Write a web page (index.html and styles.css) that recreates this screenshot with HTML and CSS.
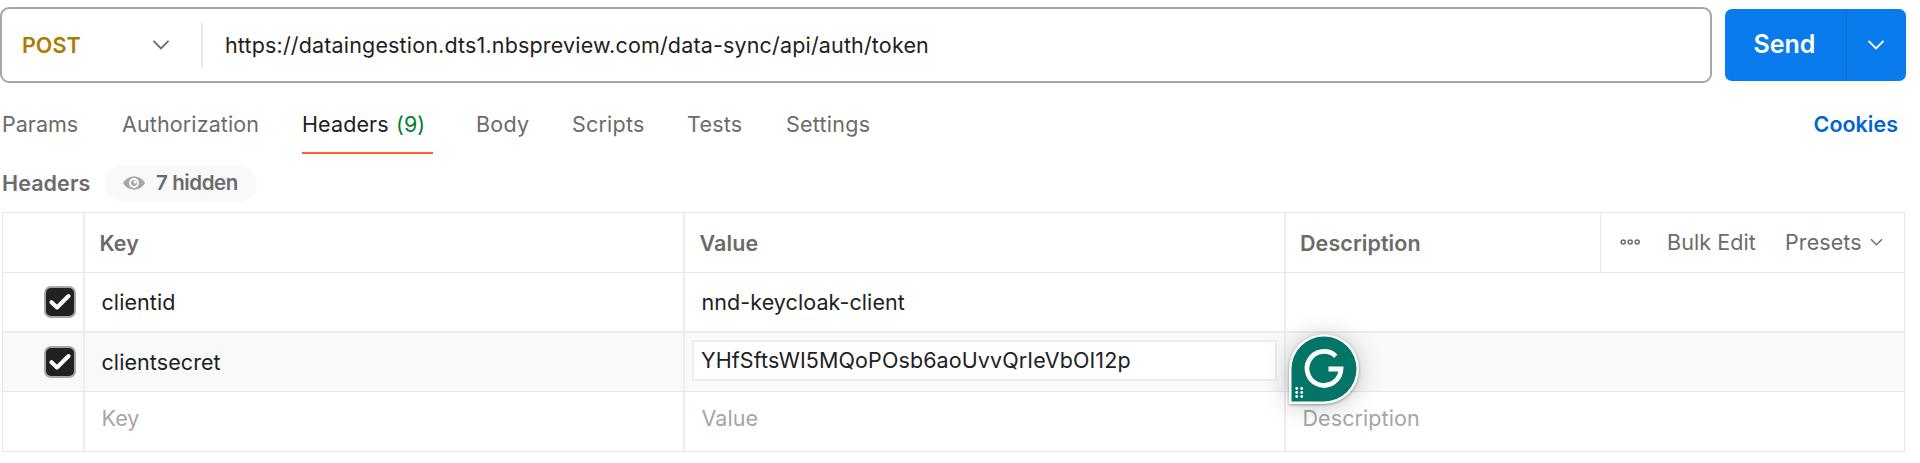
FILE: index.html
```html
<!DOCTYPE html>
<html lang="en">
<head>
<meta charset="utf-8">
<title>Request headers</title>
<link rel="stylesheet" href="styles.css">
</head>
<body>
<main class="request">
  <div class="bar">
    <div class="url-box">
      <div class="method">
        <span class="method-name">POST</span>
        <svg class="method-chevron" width="18" height="12" viewBox="0 0 18 12"><path d="M1.500 1.800 9 9.300l7.500-7.500" fill="none" stroke="#6b6b6b" stroke-width="1.900"/></svg>
      </div>
      <span class="url">https://dataingestion.dts1.nbspreview.com/data-sync/api/auth/token</span>
    </div>
    <div class="send">
      <span class="send-label">Send</span>
      <span class="send-more"><svg width="18" height="12" viewBox="0 0 18 12"><path d="M1.500 1.800 9 9.300l7.500-7.500" fill="none" stroke="#fff" stroke-width="1.900"/></svg></span>
    </div>
  </div>
  <nav class="tabs">
    <span class="tab t-params">Params</span>
    <span class="tab t-auth">Authorization</span>
    <span class="tab t-headers active">Headers <span class="count">(9)</span></span>
    <span class="tab t-body">Body</span>
    <span class="tab t-scripts">Scripts</span>
    <span class="tab t-tests">Tests</span>
    <span class="tab t-settings">Settings</span>
    <span class="cookies">Cookies</span>
  </nav>
  <div class="section">
    <span class="section-title">Headers</span>
    <span class="pill">
      <svg width="22" height="14" viewBox="0 0 22 14"><path d="M0 7C4.500-1.700 17.500-1.700 22 7 17.500 15.700 4.500 15.700 0 7z" fill="#a6a6a6"/><circle cx="11" cy="7" r="4.900" fill="#fff"/><circle cx="11" cy="7" r="3" fill="#a6a6a6"/><circle cx="12" cy="6" r="1.500" fill="#fff"/></svg>
      <span class="pill-text">7 hidden</span>
    </span>
  </div>
  <div class="table">
    <div class="row head">
      <div class="cell"></div>
      <div class="cell">Key</div>
      <div class="cell">Value</div>
      <div class="cell last">
        <span>Description</span>
        <div class="tools">
          <svg class="dots" width="20" height="8" viewBox="0 0 20 8" fill="none" stroke="#6b6b6b" stroke-width="1.500"><circle cx="3.200" cy="4" r="2"/><circle cx="10.200" cy="4" r="2"/><circle cx="17.200" cy="4" r="2"/></svg>
          <span class="bulk">Bulk Edit</span>
          <span class="presets">Presets</span>
          <svg class="presets-chevron" width="13" height="9" viewBox="0 0 13 9"><path d="M1 1.300 6.500 6.800 12 1.300" fill="none" stroke="#6b6b6b" stroke-width="1.400"/></svg>
        </div>
      </div>
    </div>
    <div class="row">
      <div class="cell check"><span class="box"><svg width="22" height="18" viewBox="0 0 22 18"><path d="M2.500 9.200 8 14.500 19.500 3" fill="none" stroke="#fff" stroke-width="4" stroke-linecap="round" stroke-linejoin="round"/></svg></span></div>
      <div class="cell">clientid</div>
      <div class="cell">nnd-keycloak-client</div>
      <div class="cell last"></div>
    </div>
    <div class="row hover">
      <div class="cell check"><span class="box"><svg width="22" height="18" viewBox="0 0 22 18"><path d="M2.500 9.200 8 14.500 19.500 3" fill="none" stroke="#fff" stroke-width="4" stroke-linecap="round" stroke-linejoin="round"/></svg></span></div>
      <div class="cell">clientsecret</div>
      <div class="cell edit"><span class="input">YHfSftsWI5MQoPOsb6aoUvvQrIeVbOI12p</span></div>
      <div class="cell last">
        <div class="assistant">
          <svg width="70" height="70" viewBox="0 0 70 70"><path d="M1 69V35A34 34 0 1 1 35 69z" fill="#fff"/><path d="M2.500 67.500V35A32.500 32.500 0 1 1 35 67.500z" fill="#027567"/><path d="M46.800 22.200A17 17 0 1 0 52 35H39.500" fill="none" stroke="#fff" stroke-width="4.800"/><g fill="#fff"><circle cx="7.700" cy="54.500" r="1.400"/><circle cx="12.700" cy="54.500" r="1.400"/><circle cx="7.700" cy="58.500" r="1.400"/><circle cx="12.700" cy="58.500" r="1.400"/><circle cx="7.700" cy="62.500" r="1.400"/><circle cx="12.700" cy="62.500" r="1.400"/></g></svg>
        </div>
      </div>
    </div>
    <div class="row empty">
      <div class="cell"></div>
      <div class="cell">Key</div>
      <div class="cell">Value</div>
      <div class="cell last">Description</div>
    </div>
  </div>
</main>
</body>
</html>
```
FILE: styles.css
```css
* { box-sizing: border-box; }
body {
  margin: 0;
  background: #fff;
  color: #212121;
  font: 400 21.5px/30px Inter, "Liberation Sans", sans-serif;
  overflow: hidden;
}
svg { display: block; flex: none; }
span { white-space: nowrap; }
.request { width: 1920px; height: 463px; padding-top: 7px; }

.bar { display: flex; gap: 12.5px; }
.url-box {
  display: flex;
  align-items: center;
  width: 1712px;
  height: 76px;
  border: 2px solid #a6a6a6;
  border-radius: 9px;
}
.method {
  display: flex;
  align-items: center;
  width: 201px;
  height: 44px;
  padding-left: 20px;
  border-right: 2px solid #e6e6e6;
}
.method-name { width: 130px; color: #ad7a03; font-weight: 600; }
.url { padding-left: 22px; letter-spacing: .16px; }
.send {
  display: flex;
  width: 181px;
  height: 72px;
  margin-top: 2px;
  border-radius: 7px;
  background: #097bed;
  color: #fff;
}
.send-label {
  width: 122px;
  padding-left: 29px;
  border-right: 1px solid #0b6fd3;
  font-size: 25px;
  font-weight: 600;
  line-height: 71px;
}
.send-more { display: flex; flex: 1; align-items: center; justify-content: center; }

.tabs {
  display: flex;
  height: 71px;
  padding: 26px 22px 0 2px;
  color: #6b6b6b;
}
.tab { height: 45px; letter-spacing: .12px; }
.t-params { width: 120px; letter-spacing: 0; }
.t-auth { width: 180px; }
.t-headers { width: 131px; margin-right: 43px; }
.t-body { width: 96px; letter-spacing: .25px; }
.t-scripts { width: 115px; letter-spacing: .2px; }
.t-tests { width: 99px; letter-spacing: .2px; }
.t-settings { letter-spacing: .25px; }
.active { color: #212121; border-bottom: 2px solid #ff6029; }
.count { margin-left: 1px; color: #007f31; }
.cookies { margin-left: auto; color: #0265d2; font-weight: 600; }

.section {
  display: flex;
  align-items: center;
  height: 58px;
  padding-left: 2px;
  color: #6b6b6b;
  font-weight: 600;
}
.section-title { width: 103px; letter-spacing: .1px; }
.pill {
  display: flex;
  align-items: center;
  gap: 11px;
  width: 152px;
  height: 37px;
  padding-left: 18px;
  border-radius: 19px;
  background: #f9f9f9;
}
.pill-text { font-size: 20.500px; letter-spacing: -.4px; }

.table { width: 1903px; margin-left: 2px; border: 1px solid #e6e6e6; border-bottom: 0; }
.row {
  display: grid;
  grid-template-columns: 82px 600px 601px 1fr;
  height: 60px;
  border-bottom: 1px solid #e6e6e6;
}
.row:nth-child(2) { border-bottom: 2px solid #ededed; }
.cell {
  display: flex;
  align-items: center;
  padding: 0 0 1px 16.5px;
  border-right: 2px solid #ededed;
  letter-spacing: .08px;
}
.last { position: relative; border-right: 0; }
.head .cell { padding: 0 0 0 14.5px; color: #6b6b6b; font-weight: 600; }
.head .last { justify-content: space-between; padding: 0 0 0 14px; }
.tools {
  display: flex;
  align-items: center;
  width: 304px;
  height: 100%;
  padding: 0 0 1px 19px;
  border-left: 1px solid #e6e6e6;
  font-weight: 400;
}
.bulk { width: 118px; margin-left: 27px; }
.presets { width: 85px; }
.row.hover { height: 59px; background: #f9f9f9; }
.empty .cell { padding-bottom: 8px; color: #a6a6a6; }
.cell.check { padding-left: 41px; }
.box {
  display: flex;
  align-items: center;
  justify-content: center;
  flex: none;
  width: 32px;
  height: 32px;
  border: 2px solid #a6a6a6;
  border-radius: 7px;
  background: #212121;
}
.cell.edit { padding-left: 7px; }
.input {
  width: 585px;
  height: 41px;
  margin-bottom: 2px;
  padding-left: 7px;
  border: 2px solid #ededed;
  background: #fff;
  letter-spacing: .1px;
  line-height: 37px;
}
.assistant {
  position: absolute;
  left: 3px;
  top: 1px;
  z-index: 2;
  border-radius: 50% 50% 50% 0;
  box-shadow: 0 2px 26px rgba(0, 0, 0, .22), 0 1px 3px rgba(0, 0, 0, .35);
}
```
